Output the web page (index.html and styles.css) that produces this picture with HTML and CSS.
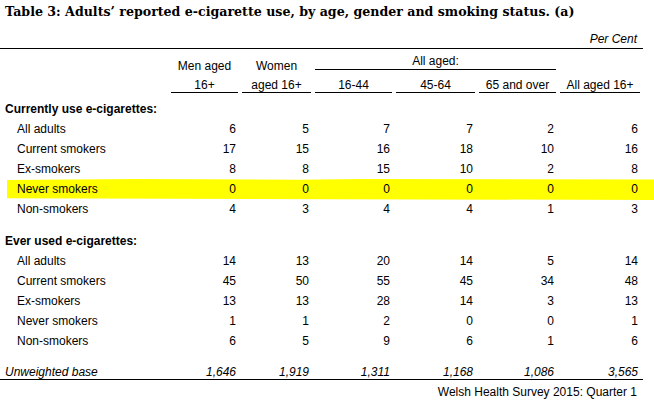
FILE: index.html
```html
<!DOCTYPE html>
<html lang="en">
<head>
<meta charset="utf-8">
<title>Table 3</title>
<link rel="stylesheet" href="styles.css">
</head>
<body>
<div class="page">
  <h1 class="title">Table 3: Adults’ reported e-cigarette use, by age, gender and smoking status. (a)</h1>
  <div class="unit">Per Cent</div>
  <div class="table">
    <div class="head">
      <div class="hcell men">Men aged<br>16+</div>
      <div class="hcell women">Women<br>aged 16+</div>
      <div class="hcell allaged">All aged:</div>
      <div class="hcell sub c4">16-44</div>
      <div class="hcell sub c5">45-64</div>
      <div class="hcell sub c6">65 and over</div>
      <div class="hcell sub c7">All aged 16+</div>
    </div>

    <div class="block first">
      <div class="row section"><div class="label">Currently use e-cigarettes:</div></div>
      <div class="row"><div class="label ind">All adults</div><div class="v">6</div><div class="v">5</div><div class="v">7</div><div class="v">7</div><div class="v">2</div><div class="v">6</div></div>
      <div class="row"><div class="label ind">Current smokers</div><div class="v">17</div><div class="v">15</div><div class="v">16</div><div class="v">18</div><div class="v">10</div><div class="v">16</div></div>
      <div class="row"><div class="label ind">Ex-smokers</div><div class="v">8</div><div class="v">8</div><div class="v">15</div><div class="v">10</div><div class="v">2</div><div class="v">8</div></div>
      <div class="row hl"><div class="label ind">Never smokers</div><div class="v">0</div><div class="v">0</div><div class="v">0</div><div class="v">0</div><div class="v">0</div><div class="v">0</div></div>
      <div class="row"><div class="label ind">Non-smokers</div><div class="v">4</div><div class="v">3</div><div class="v">4</div><div class="v">4</div><div class="v">1</div><div class="v">3</div></div>
    </div>

    <div class="block second">
      <div class="row section"><div class="label">Ever used e-cigarettes:</div></div>
      <div class="row"><div class="label ind">All adults</div><div class="v">14</div><div class="v">13</div><div class="v">20</div><div class="v">14</div><div class="v">5</div><div class="v">14</div></div>
      <div class="row"><div class="label ind">Current smokers</div><div class="v">45</div><div class="v">50</div><div class="v">55</div><div class="v">45</div><div class="v">34</div><div class="v">48</div></div>
      <div class="row"><div class="label ind">Ex-smokers</div><div class="v">13</div><div class="v">13</div><div class="v">28</div><div class="v">14</div><div class="v">3</div><div class="v">13</div></div>
      <div class="row"><div class="label ind">Never smokers</div><div class="v">1</div><div class="v">1</div><div class="v">2</div><div class="v">0</div><div class="v">0</div><div class="v">1</div></div>
      <div class="row"><div class="label ind">Non-smokers</div><div class="v">6</div><div class="v">5</div><div class="v">9</div><div class="v">6</div><div class="v">1</div><div class="v">6</div></div>
    </div>

    <div class="row base"><div class="label">Unweighted base</div><div class="v">1,646</div><div class="v">1,919</div><div class="v">1,311</div><div class="v">1,168</div><div class="v">1,086</div><div class="v">3,565</div></div>
  </div>
  <div class="source">Welsh Health Survey 2015: Quarter 1</div>
</div>
</body>
</html>
```

FILE: styles.css
```css
html, body {
  margin: 0;
  padding: 0;
  background: #ffffff;
}

.page {
  width: 654px;
  height: 403px;
  overflow: hidden;
  font-family: "Liberation Sans", Arial, sans-serif;
  font-size: 12px;
  color: #000000;
}

.title {
  margin: 0;
  padding: 3px 0 0 5px;
  height: 18px;
  font-family: "DejaVu Serif", "Liberation Serif", serif;
  font-weight: bold;
  font-size: 12.6px;
  line-height: 18px;
  white-space: nowrap;
}

.unit {
  width: 643px;
  box-sizing: border-box;
  margin-top: 9px;
  padding-right: 6px;
  text-align: right;
  font-style: italic;
  line-height: 18px;
}

.table {
  width: 643px;
  border-top: 1px solid #000000;
}

.head,
.row {
  display: grid;
  grid-template-columns: 167px 67px 69px 77px 79px 77px 80px;
  column-gap: 4px;
}

.head {
  grid-template-rows: 21px 23px;
}

.hcell {
  text-align: center;
  border-bottom: 1px solid #000000;
  line-height: 14px;
}

.men,
.women {
  grid-row: 1 / span 2;
  padding-top: 8px;
  line-height: 19px;
}

.men { grid-column: 2; }
.women { grid-column: 3; }

.allaged {
  grid-row: 1;
  grid-column: 4 / span 3;
  padding-top: 5px;
}

.sub {
  grid-row: 2;
  padding-top: 8px;
}

.c4 { grid-column: 4; }
.c5 { grid-column: 5; }
.c6 { grid-column: 6; }
.c7 { grid-column: 7; }

.block.first {
  margin-top: 6px;
}

.block.second {
  margin-top: 12px;
}

.row {
  position: relative;
  line-height: 20px;
  height: 20px;
}

.row.section .label {
  font-weight: bold;
}

.label {
  padding-left: 5px;
  white-space: nowrap;
}

.label.ind {
  padding-left: 17px;
}

.v {
  text-align: right;
  padding-right: 2px;
  position: relative;
}

.row.hl::before {
  content: "";
  position: absolute;
  left: 7px;
  right: -11px;
  top: 0;
  bottom: -1px;
  background: #ffff00;
  clip-path: polygon(0 5%, 20% 0, 45% 4%, 55% 0, 100% 2%, 100% 100%, 50% 96%, 0 92%);
}

.row.hl > div {
  position: relative;
}

.row.base {
  margin-top: 14px;
  height: 14px;
  line-height: 14px;
  font-style: italic;
  border-bottom: 1px solid #000000;
}

.row.base .label {
  padding-left: 5px;
}

.source {
  width: 643px;
  box-sizing: border-box;
  padding: 3px 6px 0 0;
  text-align: right;
  line-height: 18px;
}
```
